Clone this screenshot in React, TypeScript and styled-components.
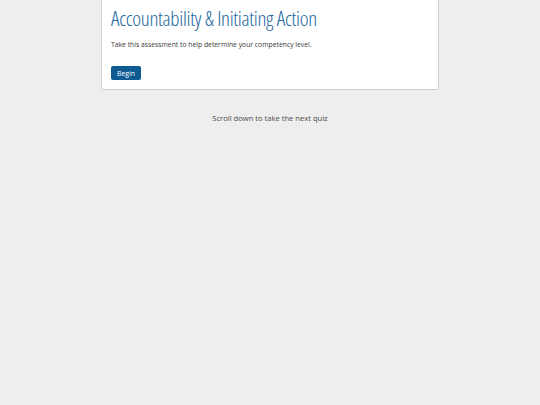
import styled, {createGlobalStyle} from 'styled-components';

const GlobalStyle = createGlobalStyle`
	html, body {
		margin: 0;
		padding: 0;
		background: #eeeeee;
		font-family: 'Open Sans', 'Liberation Sans', sans-serif;
	}
`;

const Page = styled.div`
	width: 540px;
	min-height: 405px;
	display: flex;
	flex-direction: column;
	align-items: center;
	background: #eeeeee;
`;

const Card = styled.div`
	width: 338px;
	box-sizing: border-box;
	margin-top: -2px;
	padding: 4px 9px 9px;
	background: #ffffff;
	border: 1px solid #cfcfcf;
	border-radius: 2px;
`;

const Title = styled.h1`
	margin: 0;
	font-family: 'Open Sans', sans-serif;
	font-stretch: 75%;
	font-weight: 300;
	font-size: 21px;
	line-height: 30px;
	color: #22679c;
	letter-spacing: -0.3px;
`;

const Intro = styled.p`
	margin: 7px 0 0;
	font-size: 6.8px;
	line-height: 10px;
	color: #3a3a3a;
`;

const BeginButton = styled.button`
	display: block;
	margin-top: 16px;
	width: 30px;
	height: 14px;
	padding: 0;
	border: none;
	border-radius: 2px;
	background: #0e5a92;
	color: #ffffff;
	font-family: 'Open Sans', sans-serif;
	font-size: 6.8px;
	cursor: pointer;
`;

const Hint = styled.div`
	margin-top: 23px;
	font-size: 7.6px;
	color: #4a4a4a;
`;

const App = () => {
	return (
		<Page>
			<GlobalStyle />
			<Card>
				<Title>Accountability &amp; Initiating Action</Title>
				<Intro>Take this assessment to help determine your competency level.</Intro>
				<BeginButton>Begin</BeginButton>
			</Card>
			<Hint>Scroll down to take the next quiz</Hint>
		</Page>
	);
};

export default App;
